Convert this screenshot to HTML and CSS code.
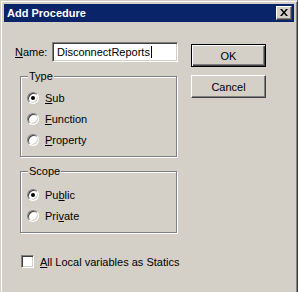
FILE: index.html
```html
<!DOCTYPE html>
<html lang="en">
<head>
    <meta charset="UTF-8">
    <title>Add Procedure</title>
    <link rel="stylesheet" href="styles.css">
</head>
<body>
    <div class="window">
        <div class="titlebar">
            <span class="title">Add Procedure</span>
            <span class="close-btn">
                <svg width="8" height="7" viewBox="0 0 8 7">
                    <path d="M0 0h2l2 2.5 2-2.5h2l-3 3.5 3 3.5h-2l-2-2.5-2 2.5h-2l3-3.5z" fill="#000"/>
                </svg>
            </span>
        </div>

        <div class="client">
            <div class="left">
                <div class="name-row">
                    <label class="name-label"><u>N</u>ame:</label>
                    <div class="textbox"><span class="caret">DisconnectReports</span></div>
                </div>

                <div class="group type-group">
                    <span class="group-title">Type</span>
                    <div class="option"><span class="radio checked"></span><span><u>S</u>ub</span></div>
                    <div class="option"><span class="radio"></span><span><u>F</u>unction</span></div>
                    <div class="option"><span class="radio"></span><span><u>P</u>roperty</span></div>
                </div>

                <div class="group scope-group">
                    <span class="group-title">Scope</span>
                    <div class="option"><span class="radio checked"></span><span>Pu<u>b</u>lic</span></div>
                    <div class="option"><span class="radio"></span><span>Pri<u>v</u>ate</span></div>
                </div>

                <div class="check-row">
                    <span class="checkbox"></span>
                    <span><u>A</u>ll Local variables as Statics</span>
                </div>
            </div>

            <div class="right">
                <button class="btn default">OK</button>
                <button class="btn">Cancel</button>
            </div>
        </div>
    </div>
</body>
</html>
```

FILE: styles.css
```css
body {
    margin: 0;
    overflow: hidden;
    background-color: #d4d0c8;
    font-family: "Liberation Sans", Arial, sans-serif;
    font-size: 11px;
    color: #000;
}
.window {
    width: 298px;
    height: 300px;
    box-sizing: border-box;
    background-color: #d4d0c8;
    border-top: 1px solid #d4d0c8;
    border-left: 1px solid #d4d0c8;
    border-right: 1px solid #404040;
    border-bottom: 1px solid #404040;
    box-shadow: inset 1px 1px #fff, inset -1px -1px #808080;
    padding: 3px;
}
.titlebar {
    height: 18px;
    background-color: #0a246a;
    display: flex;
    align-items: center;
    justify-content: space-between;
    padding: 0 2px 0 3px;
}
.title {
    color: #fff;
    font-weight: bold;
    font-size: 11px;
}
.close-btn {
    width: 16px;
    height: 14px;
    box-sizing: border-box;
    background-color: #d4d0c8;
    border-top: 1px solid #fff;
    border-left: 1px solid #fff;
    border-right: 1px solid #404040;
    border-bottom: 1px solid #404040;
    box-shadow: inset -1px -1px #808080;
    display: flex;
    align-items: center;
    justify-content: center;
    padding: 0 1px 1px 0;
}
.client {
    display: flex;
    padding: 20px 0 0 11px;
}
.left {
    width: 163px;
}
.name-row {
    display: flex;
    align-items: center;
    height: 20px;
}
.name-label {
    width: 37px;
}
.textbox {
    width: 126px;
    height: 20px;
    box-sizing: border-box;
    background-color: #fff;
    border-top: 1px solid #808080;
    border-left: 1px solid #808080;
    border-right: 1px solid #fff;
    border-bottom: 1px solid #fff;
    box-shadow: inset 1px 1px #404040, inset -1px -1px #d4d0c8;
    padding: 3px 0 0 4px;
    line-height: 13px;
}
.caret {
    border-right: 1px solid #000;
    padding-right: 1px;
}
.group {
    position: relative;
    width: 157px;
    box-sizing: border-box;
    margin-left: 5px;
    border: 1px solid #808080;
    box-shadow: inset 1px 1px #fff, 1px 1px #fff;
    padding: 10px 0 6px 6px;
}
.type-group {
    margin-top: 14px;
}
.scope-group {
    margin-top: 14px;
    padding-top: 12px;
}
.group-title {
    position: absolute;
    top: -7px;
    left: 7px;
    padding: 0 1px;
    background-color: #d4d0c8;
    line-height: 13px;
}
.option {
    display: flex;
    align-items: center;
    height: 21px;
    gap: 6px;
}
.radio {
    width: 12px;
    height: 12px;
    box-sizing: border-box;
    border-radius: 50%;
    background-color: #fff;
    border-top: 1px solid #808080;
    border-left: 1px solid #808080;
    border-right: 1px solid #fff;
    border-bottom: 1px solid #fff;
    box-shadow: inset 1px 1px #404040, inset -1px -1px #d4d0c8;
    display: flex;
    align-items: center;
    justify-content: center;
}
.radio.checked::after {
    content: "";
    width: 4px;
    height: 4px;
    border-radius: 50%;
    background-color: #000;
}
.check-row {
    display: flex;
    align-items: center;
    gap: 6px;
    margin: 22px 0 0 6px;
    white-space: nowrap;
}
.checkbox {
    flex-shrink: 0;
    width: 13px;
    height: 13px;
    box-sizing: border-box;
    background-color: #fff;
    border-top: 1px solid #808080;
    border-left: 1px solid #808080;
    border-right: 1px solid #fff;
    border-bottom: 1px solid #fff;
    box-shadow: inset 1px 1px #404040, inset -1px -1px #d4d0c8;
}
.right {
    display: flex;
    flex-direction: column;
    gap: 8px;
    margin: 2px 0 0 13px;
}
.btn {
    width: 75px;
    height: 23px;
    box-sizing: border-box;
    font-family: "Liberation Sans", Arial, sans-serif;
    font-size: 11px;
    color: #000;
    background-color: #d4d0c8;
    border-top: 1px solid #fff;
    border-left: 1px solid #fff;
    border-right: 1px solid #404040;
    border-bottom: 1px solid #404040;
    box-shadow: inset -1px -1px #808080;
    padding: 0;
}
.btn.default {
    border: 1px solid #000;
    box-shadow: inset 1px 1px #fff, inset -1px -1px #404040, inset -2px -2px #808080;
}
```
